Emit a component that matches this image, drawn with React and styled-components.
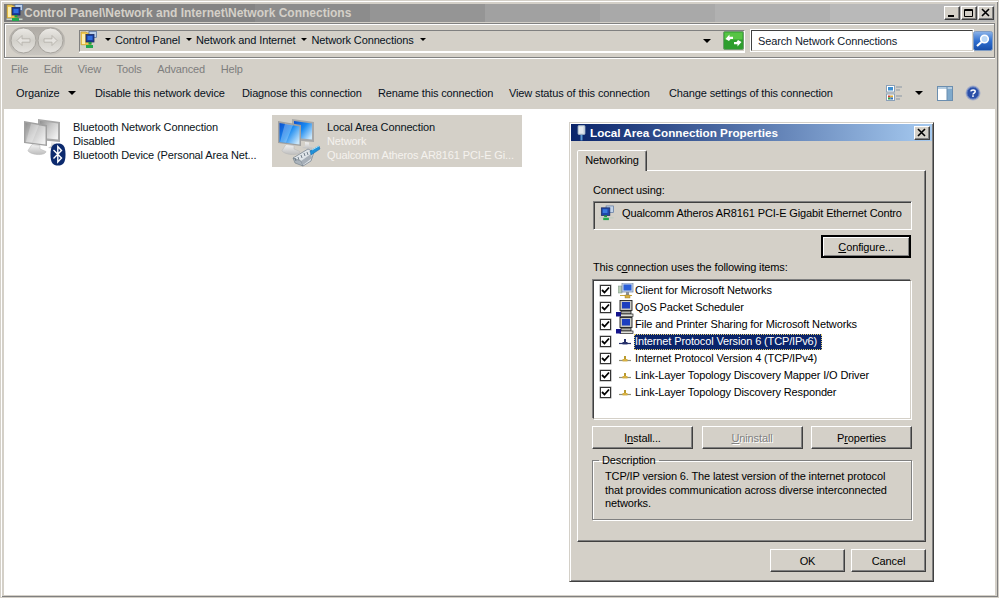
import React from "react";
import styled, { createGlobalStyle, css } from "styled-components";

const Global = createGlobalStyle`
  html, body { margin: 0; padding: 0; background: #d4d0c8; }
  body { font-family: "Liberation Sans", Arial, sans-serif; font-size: 11px; letter-spacing: -0.13px; color: #000; overflow: hidden; }
  * { box-sizing: border-box; }
`;

const raised = css`
  border: 1px solid;
  border-color: #fff #404040 #404040 #fff;
  box-shadow: inset -1px -1px 0 #808080;
`;

const Page = styled.div`
  position: relative;
  width: 999px;
  height: 598px;
  display: flex;
  flex-direction: column;
  padding: 3px 3px 2px 3px;
  background: #d4d0c8;
  border: 1px solid #d4d0c8;
  box-shadow: inset 1px 1px 0 #fff, inset -1px -1px 0 #808080;
`;
const TitleBar = styled.div`
  height: 18px;
  flex: none;
  display: flex;
  align-items: center;
  padding: 0 1px 0 2px;
  background: linear-gradient(90deg,
    #7b7b7b 0 136px, #848484 136px 251px, #8c8c8c 251px 366px, #959595 366px 481px,
    #a1a1a1 481px 596px, #a9a9a9 596px 711px, #b1b1b1 711px 826px, #b9b9b9 826px);
`;
const TitleText = styled.div`
  flex: 1;
  font-weight: 700;
  font-size: 12px;
  letter-spacing: 0;
  color: #d4d0c8;
  white-space: nowrap;
`;
const WinBtns = styled.div`
  display: flex;
  gap: 1px;
`;
const WinBtn = styled.div`
  width: 16px;
  height: 14px;
  background: #d4d0c8;
  display: flex;
  align-items: center;
  justify-content: center;
  ${raised}
`;
const AddressBand = styled.div`
  height: 35px;
  flex: none;
  margin-top: 1px;
  display: flex;
  align-items: center;
  padding: 0 1px 0 4px;
  background: #d4d0c8;
  border: 1px solid #808080;
  box-shadow: inset 1px 1px 0 #fff, 0 1px 0 #fff;
`;
const NavPill = styled.div`
  display: flex;
  align-items: center;
  padding: 1px;
  height: 28px;
  border-radius: 14px;
  background: linear-gradient(#aeaaa4, #c9c6c0);
`;
const AddressField = styled.div`
  flex: 1;
  height: 22px;
  margin-left: 14px;
  padding-bottom: 2px;
  display: flex;
  align-items: center;
  border-top: 1px solid #808080;
  border-left: 1px solid #808080;
  border-bottom: 1px solid #fff;
  border-right: 1px solid #fff;
  box-shadow: 0 1px 0 #fff;
`;
const Crumb = styled.span`
  white-space: nowrap;
  color: #06101c;
`;
const Caret = styled.span`
  display: inline-block;
  flex: none;
  width: 0;
  height: 0;
  border-left: ${p => p.$s || 3}px solid transparent;
  border-right: ${p => p.$s || 3}px solid transparent;
  border-top: ${p => p.$s || 3}px solid #000;
  margin: 0 ${p => p.$r ?? 6}px 0 ${p => p.$l ?? 6}px;
`;
const FieldEnd = styled.div`
  margin-left: auto;
  display: flex;
  align-items: center;
  margin-top: 2px;
`;
const SearchBox = styled.div`
  width: 222px;
  height: 21px;
  margin-left: 6px;
  padding-left: 6px;
  display: flex;
  align-items: center;
  background: #fff;
  border: 1px solid;
  border-color: #404040 #d4d0c8 #d4d0c8 #404040;
  box-shadow: 0 0 0 1px #fff;
  color: #10202c;
  white-space: nowrap;
`;
const MenuBar = styled.div`
  height: 21px;
  flex: none;
  display: flex;
  align-items: center;
  padding-left: 7px;
  gap: 15.6px;
  color: #7e7e7e;
`;
const MenuItem = styled.span``;
const Toolbar = styled.div`
  height: 30px;
  flex: none;
  display: flex;
  align-items: center;
  padding: 0 14px 2px 12px;
  color: #08101c;
`;
const ToolItem = styled.span`
  white-space: nowrap;
  width: ${p => p.$w}px;
  flex: none;
`;
const ToolIcons = styled.div`
  margin-left: auto;
  display: flex;
  align-items: center;
`;
const HelpGap = styled.span`
  width: 12px;
`;
const Content = styled.main`
  flex: 1;
  background: #fff;
  padding: 6px 14px;
  display: flex;
  align-items: flex-start;
  gap: 4px;
`;
const ConnItem = styled.div`
  width: 250px;
  height: 52px;
  display: flex;
  align-items: flex-start;
  padding: 3px 0 0 3px;
  background: ${p => p.$selected ? "#d4d0c8" : "transparent"};
`;
const ConnIcon = styled.div`
  width: 48px;
  height: 48px;
  flex: none;
`;
const ConnText = styled.div`
  margin-left: 4px;
  padding-top: 2px;
  line-height: 14px;
  white-space: nowrap;
  color: #0a1420;
`;
const ConnSub = styled.div`
  color: ${p => p.$light ? "#f4f2ee" : "#0a1420"};
`;

/* dialog */
const Dialog = styled.section`
  position: absolute;
  left: 568px;
  top: 121px;
  width: 365px;
  height: 460px;
  padding: 0 7px;
  display: flex;
  flex-direction: column;
  background: #d4d0c8;
  border: 1px solid;
  border-color: #d4d0c8 #404040 #404040 #d4d0c8;
  box-shadow: inset 1px 1px 0 #fff, inset -1px -1px 0 #808080;
`;
const DlgTitle = styled.div`
  height: 17px;
  flex: none;
  margin: 1px -6px 0;
  display: flex;
  align-items: center;
  padding: 0 2px 0 3px;
  background: linear-gradient(90deg, #0a246a, #a6caf0);
  color: #fff;
  font-weight: 700;
  font-size: 11.7px;
  letter-spacing: 0;
`;
const DlgTitleText = styled.div`
  flex: 1;
`;
const DlgClose = styled(WinBtn)`
  width: 16px;
  height: 14px;
`;
const Tabs = styled.div`
  margin-top: 9px;
  height: 20px;
  flex: none;
  display: flex;
  position: relative;
  z-index: 1;
`;
const Tab = styled.div`
  width: 70px;
  height: 21px;
  padding-bottom: 2px;
  display: flex;
  align-items: center;
  justify-content: center;
  background: #d4d0c8;
  border: 1px solid;
  border-bottom: none;
  border-color: #fff #404040 transparent #fff;
  border-radius: 2px 2px 0 0;
  box-shadow: inset -1px 0 0 #808080;
`;
const Panel = styled.div`
  width: 349px;
  height: 372px;
  flex: none;
  padding: 12px 13px 0 15px;
  display: flex;
  flex-direction: column;
  ${raised}
`;
const Label = styled.div`
  height: 14px;
  line-height: 14px;
  white-space: nowrap;
`;
const AdapterBox = styled.div`
  margin-top: 4px;
  height: 29px;
  display: flex;
  align-items: center;
  padding: 0 0 5px 5px;
  border: 1px solid;
  border-color: #808080 #fff #fff #808080;
  box-shadow: inset 1px 1px 0 #404040;
  white-space: nowrap;
  overflow: hidden;
`;
const AdapterName = styled.span`
  margin-left: 7px;
`;
const Button = styled.div`
  width: ${p => p.$w || 100}px;
  height: 23px;
  flex: none;
  display: flex;
  align-items: center;
  justify-content: center;
  background: #d4d0c8;
  color: ${p => p.$disabled ? "#808080" : "#000"};
  text-shadow: ${p => p.$disabled ? "1px 1px 0 #fff" : "none"};
  ${raised}
  ${p => p.$default && css`
    border: 2px solid #000;
    box-shadow: inset 1px 1px 0 #fff, inset -1px -1px 0 #808080;
  `}
`;
const ConfigureRow = styled.div`
  margin-top: 5px;
  display: flex;
  justify-content: flex-end;
  padding-right: 1px;
`;
const ListLabel = styled(Label)`
  margin-top: 2px;
`;
const List = styled.div`
  margin-top: 6px;
  height: 139px;
  width: 318px;
  padding: 1px 0 0 6px;
  background: #fff;
  border: 1px solid;
  border-color: #404040 #d4d0c8 #d4d0c8 #404040;
  box-shadow: -1px -1px 0 #808080, 1px 1px 0 #fff;
`;
const Row = styled.div`
  height: 17px;
  display: flex;
  align-items: center;
`;
const Check = styled.div`
  width: 11px;
  height: 11px;
  flex: none;
  display: flex;
  align-items: center;
  justify-content: center;
  border: 1px solid #333;
  box-shadow: 0 0 0 0.5px #999;
`;
const RowIcon = styled.div`
  width: 16px;
  height: 16px;
  flex: none;
  margin-left: 7px;
`;
const RowText = styled.div`
  padding: 0 2px 0 1px;
  height: 16px;
  line-height: 15px;
  white-space: nowrap;
  ${p => p.$selected && css`
    padding-right: 5px;
    background: #0a246a;
    color: #fff;
    outline: 1px dotted #e8d070;
    outline-offset: -1px;
  `}
`;
const ButtonRow = styled.div`
  margin-top: 7px;
  margin-left: -1px;
  width: 320px;
  display: flex;
  justify-content: space-between;
`;
const Group = styled.fieldset`
  margin: 4px 0 0 -1px;
  padding: 3px 8px 0 12px;
  width: 320px;
  height: 67px;
  min-width: 0;
  border: 1px solid #808080;
  box-shadow: inset 1px 1px 0 #fff, 1px 1px 0 #fff;
  line-height: 13.5px;
`;
const Legend = styled.legend`
  padding: 0 3px;
  margin-left: -6px;
  line-height: 14px;
`;
const DlgFooter = styled.div`
  margin-top: 7px;
  display: flex;
  justify-content: flex-end;
  gap: 6px;
`;

/* ---- drawings ---- */
const NetFolder = ({ size = 18 }) => (
  <svg width={size} height={size} viewBox="0 0 18 18" style={{ flex: "none", display: "block" }}>
    <path d="M1 1h5l1 1h4v12H1z" fill="#f0c850" stroke="#b8962e" strokeWidth=".6" />
    <path d="M2 3h3v10H2z" fill="#fbeeb0" />
    <rect x="9" y=".5" width="7.500" height="6" fill="#bcd0ea" stroke="#4d6c99" strokeWidth=".7" />
    <rect x="6" y="3.500" width="8" height="7.500" fill="#1a3d9c" stroke="#1b2a60" strokeWidth=".8" />
    <rect x="7.500" y="5" width="5" height="4" fill="#2f6fe0" />
    <rect x="8.500" y="11" width="3" height="2.500" fill="#1c9a45" />
    <rect x=".5" y="14.500" width="16" height="1.500" fill="#c9d5c9" />
    <rect x="6" y="14" width="7" height="3" fill="#22a84e" />
  </svg>
);

const Monitors = ({ active, id }) => {
  const g = active ? ["#0a4fd0", "#1a8af0", "#c8e6fb"] : ["#8f8f8f", "#c9c9c9", "#f1f1f1"];
  return (
    <svg width="48" height="48" viewBox="0 0 48 48" style={{ display: "block" }}>
      <defs>
        <linearGradient id={id} x1="0" y1="0" x2="1" y2="0.8">
          <stop offset="0" stopColor={g[0]} />
          <stop offset=".5" stopColor={g[1]} />
          <stop offset="1" stopColor={g[2]} />
        </linearGradient>
        <linearGradient id={id + "b"} x1="0" y1="0" x2="0" y2="1">
          <stop offset="0" stopColor="#f2f2f2" />
          <stop offset="1" stopColor="#bdbdbd" />
        </linearGradient>
      </defs>
      <path d="M17 1l22 3v20l-22-2z" fill="#a8a8a8" />
      <path d="M19 3l18 2.500v16l-18-1.800z" fill={`url(#${id})`} />
      <path d="M30 24l4 .5v3l4 2-1 1.500-10-1 3-2z" fill={`url(#${id}b)`} />
      <path d="M3 3l23 4v21L3 25z" fill="#a0a0a0" />
      <path d="M4.500 5l20 3.600v18L4.500 24z" fill={`url(#${id})`} />
      <path d="M10 5.500l8 1.500-7 17.500-6-.5z" fill="#fff" opacity=".28" />
      <path d="M11 26.500l8 1v3.500l6 2.500c0 2-4 3.500-9 3s-9-2.500-9-4z" fill={`url(#${id}b)`} stroke="#b4b4b4" strokeWidth=".5" />
    </svg>
  );
};

const BluetoothBadge = () => (
  <svg width="16" height="23" viewBox="0 0 16 23" style={{ display: "block" }}>
    <path d="M8 .5C13 .5 15.500 3 15.500 11.500S13 22.500 8 22.500.5 20 .5 11.500 3 .5 8 .5z" fill="#0c2a6e" />
    <path d="M3.500 7l8 8-3.700 4V3.500l3.700 4-8 8" fill="none" stroke="#fff" strokeWidth="1.400" />
  </svg>
);

const Plug = () => (
  <svg width="30" height="23" viewBox="0 0 30 23" style={{ display: "block" }}>
    <path d="M1 14l15-9 6 3-3 9-8 5z" fill="#dfe4e8" stroke="#7d8894" strokeWidth=".8" />
    <path d="M1 14l8 3 2 5-8-3z" fill="#aab3bb" stroke="#6f7a85" strokeWidth=".6" />
    <path d="M3 14l1 3M6 13l1 3M9 11l1 3M12 9l1 3M15 8l1 3" stroke="#6a7682" strokeWidth=".9" />
    <path d="M9 17l10-7 1 4-9 7z" fill="#8e99a4" opacity=".7" />
    <path d="M18 7l9-5 1 3-9 6z" fill="#1f90d8" stroke="#1566a6" strokeWidth=".5" />
    <path d="M20 6l7-4" stroke="#9fe0fa" strokeWidth="1" />
  </svg>
);

const NavBtn = ({ flip }) => (
  <svg width="27" height="27" viewBox="0 0 27 27" style={{ display: "block", transform: flip ? "scaleX(-1)" : "none" }}>
    <defs>
      <linearGradient id="nb" x1="0" y1="0" x2="0" y2="1">
        <stop offset="0" stopColor="#eceae6" />
        <stop offset=".5" stopColor="#d2d0ca" />
        <stop offset="1" stopColor="#e6e4e0" />
      </linearGradient>
    </defs>
    <circle cx="13.500" cy="13.500" r="12.500" fill="url(#nb)" stroke="#a7a49e" />
    <path d="M7 13.500l5-5v3.300h8v3.400h-8v3.300z" fill="#e5e3df" stroke="#b5b2ac" strokeWidth=".9" />
  </svg>
);

const Refresh = () => (
  <svg width="21" height="19" viewBox="0 0 21 19" style={{ display: "block" }}>
    <rect x=".5" y=".5" width="20" height="18" rx="1.500" fill="#2f9e2f" stroke="#6f9d6f" />
    <rect x="1.500" y="1.500" width="18" height="7" fill="#57c445" />
    <path d="M2.500 8l4-4.500v2.300H10V8H7.500L6 10zM18.500 11l-4 4.500v-2.300H11V11h2.500L15 9z" fill="#fff" />
  </svg>
);

const SearchBtn = () => (
  <svg width="20" height="20" viewBox="0 0 20 20" style={{ display: "block", flex: "none" }}>
    <defs>
      <linearGradient id="sb" x1="0" y1="0" x2="0" y2="1">
        <stop offset="0" stopColor="#8db4e8" />
        <stop offset=".5" stopColor="#2f6fd0" />
        <stop offset="1" stopColor="#174da8" />
      </linearGradient>
    </defs>
    <rect x=".5" y=".5" width="19" height="19" rx="2" fill="url(#sb)" stroke="#7f9cc4" />
    <circle cx="11.500" cy="8" r="3.800" fill="#bcd8f5" stroke="#fff" strokeWidth="1.600" />
    <path d="M8.500 11l-4.500 4" stroke="#fff" strokeWidth="2.200" />
  </svg>
);

const ViewsIcon = () => (
  <svg width="17" height="16" viewBox="0 0 17 16" style={{ display: "block" }}>
    <rect x=".5" y=".5" width="8" height="6.500" fill="#fff" stroke="#8aa0b8" />
    <rect x="2" y="2" width="5" height="3.500" fill="#3f8fd0" />
    <rect x=".5" y="9" width="8" height="6.500" fill="#fff" stroke="#8aa0b8" />
    <rect x="2" y="10.500" width="2.500" height="2" fill="#d04030" />
    <rect x="4.500" y="10.500" width="2.500" height="2" fill="#e0b030" />
    <rect x="2" y="12.500" width="2.500" height="2" fill="#2f9e4f" />
    <rect x="4.500" y="12.500" width="2.500" height="2" fill="#3070c0" />
    <path d="M10 2h6M10 5h4M10 11h6M10 14h4" stroke="#8a97a5" strokeWidth="1" />
  </svg>
);

const PaneIcon = () => (
  <svg width="16" height="15" viewBox="0 0 16 15" style={{ display: "block" }}>
    <rect x=".5" y=".5" width="15" height="14" fill="#fff" stroke="#6b8eaf" />
    <rect x="1" y="1" width="14" height="2" fill="#b6cde0" />
    <rect x="10" y="3" width="5" height="11" fill="#7fa9cb" />
    <path d="M10 1v13" stroke="#6b8eaf" />
  </svg>
);

const HelpIcon = () => (
  <svg width="16" height="16" viewBox="0 0 16 16" style={{ display: "block" }}>
    <circle cx="8" cy="8" r="7.500" fill="#a5aec8" />
    <circle cx="8" cy="8" r="6" fill="#2a4fa8" stroke="#5a78c0" />
    <path d="M5.800 6.300C6 4.700 10.200 4.500 10.200 6.500c0 1.600-2.200 1.500-2.200 3" fill="none" stroke="#fff" strokeWidth="1.500" />
    <rect x="7.200" y="10.300" width="1.600" height="1.600" fill="#fff" />
  </svg>
);

const Glyph = ({ type }) => (
  <svg width="10" height="10" viewBox="0 0 10 10" style={{ display: "block" }}>
    {type === "min" && <rect x="1" y="7" width="6" height="2" fill="#000" />}
    {type === "max" && <path d="M.5 1.500h8v7h-8zM.5 2.500h8" fill="none" stroke="#000" />}
    {type === "close" && <path d="M1 1l7 7M8 1L1 8" stroke="#000" strokeWidth="1.600" />}
  </svg>
);

const Tick = () => (
  <svg width="9" height="9" viewBox="0 0 9 9" style={{ display: "block" }}>
    <path d="M1 4l2.500 2.500L8 1.500" fill="none" stroke="#000" strokeWidth="1.800" />
  </svg>
);

const LanCard = () => (
  <svg width="16" height="17" viewBox="0 0 16 18" style={{ display: "block", flex: "none" }}>
    <rect x="7" y="1" width="8" height="7" fill="#c3d3e8" stroke="#556f9a" strokeWidth=".7" />
    <rect x="2" y="3" width="9" height="8" fill="#1f46a8" stroke="#1b2a60" strokeWidth=".8" />
    <rect x="3.500" y="4.500" width="5" height="4" fill="#3a7be0" />
    <rect x="5" y="11" width="3" height="2" fill="#1c9a45" />
    <rect x="0" y="13" width="15" height="1.200" fill="#c0cbc0" />
    <rect x="4" y="13.500" width="6" height="2.500" fill="#22a84e" />
  </svg>
);

const ClientIcon = () => (
  <svg width="16" height="16" viewBox="0 0 16 16" style={{ display: "block" }}>
    <rect x="0" y="3" width="4" height="7" fill="#b8ccb4" stroke="#7a8f88" strokeWidth=".5" />
    <rect x="4" y="0" width="11" height="9" fill="#c9d8ee" stroke="#6c7f9c" strokeWidth=".7" />
    <rect x="5.500" y="1.500" width="8" height="6" fill="#2a5fd8" />
    <rect x="8" y="9" width="3" height="3" fill="#8a8f96" />
    <path d="M2 12.500h12" stroke="#c9a53c" strokeWidth="1" />
    <rect x="7" y="12" width="5" height="3" fill="#d8b040" stroke="#8a7020" strokeWidth=".4" />
  </svg>
);

const ServiceIcon = () => (
  <svg width="18" height="17" viewBox="0 0 18 17" style={{ display: "block", marginLeft: -2 }}>
    <rect x="4" y=".5" width="12" height="10" fill="#c6c6c0" stroke="#202020" strokeWidth=".9" />
    <rect x="6" y="2" width="8" height="6.500" fill="#1d3fc0" />
    <rect x="5" y="11" width="10" height="3" fill="#b0b0aa" stroke="#202020" strokeWidth=".8" />
    <rect x="4" y="14" width="13" height="2.500" fill="#e0e0da" stroke="#202020" strokeWidth=".7" />
    <rect x="0" y="12" width="5" height="4.500" fill="#14148c" />
  </svg>
);

const ProtoIcon = ({ dark }) => (
  <svg width="16" height="16" viewBox="0 0 16 16" style={{ display: "block" }}>
    <path d="M1 9.500h12" stroke={dark ? "#25306a" : "#8f8f7a"} strokeWidth="1.200" />
    <rect x="6" y="5" width="2" height="4" fill={dark ? "#25306a" : "#b89a30"} />
    <rect x="4.500" y="8" width="5" height="2.400" fill={dark ? "#25306a" : "#d8b040"} />
  </svg>
);

const PlugSmall = () => (
  <svg width="16" height="16" viewBox="0 0 16 16" style={{ display: "block", flex: "none" }}>
    <rect x="4" y=".5" width="7" height="9" rx="1" fill="#d4dce4" stroke="#9fb2c4" strokeWidth=".8" />
    <path d="M6 2v6M8 2v6" stroke="#fff" strokeWidth=".8" />
    <rect x="6.500" y="10" width="2" height="5.500" fill="#5a9ad4" />
  </svg>
);

const rows = [
  { icon: <ClientIcon />, text: "Client for Microsoft Networks" },
  { icon: <ServiceIcon />, text: "QoS Packet Scheduler" },
  { icon: <ServiceIcon />, text: "File and Printer Sharing for Microsoft Networks" },
  { icon: <ProtoIcon dark />, text: "Internet Protocol Version 6 (TCP/IPv6)", selected: true },
  { icon: <ProtoIcon />, text: "Internet Protocol Version 4 (TCP/IPv4)" },
  { icon: <ProtoIcon />, text: "Link-Layer Topology Discovery Mapper I/O Driver" },
  { icon: <ProtoIcon />, text: "Link-Layer Topology Discovery Responder" },
];

const IconOverlay = styled.div`
  position: relative;
  width: 48px;
  height: 48px;
`;
const Badge = styled.div`
  position: absolute;
  left: ${p => p.$x}px;
  top: ${p => p.$y}px;
`;

export default function App() {
  return (
    <Page>
      <Global />
      <TitleBar>
        <NetFolder />
        <TitleText>Control Panel\Network and Internet\Network Connections</TitleText>
        <WinBtns>
          <WinBtn><Glyph type="min" /></WinBtn>
          <WinBtn><Glyph type="max" /></WinBtn>
          <WinBtn><Glyph type="close" /></WinBtn>
        </WinBtns>
      </TitleBar>

      <AddressBand>
        <NavPill><NavBtn /><NavBtn flip /></NavPill>
        <AddressField>
          <NetFolder />
          <Caret $l={7} $r={4} />
          <Crumb>Control Panel</Crumb>
          <Caret $l={6} $r={4} />
          <Crumb>Network and Internet</Crumb>
          <Caret $l={6} $r={4} />
          <Crumb>Network Connections</Crumb>
          <Caret $l={6} $r={0} />
          <FieldEnd>
            <Caret $s={4} $l={0} $r={12} />
            <Refresh />
          </FieldEnd>
        </AddressField>
        <SearchBox>Search Network Connections</SearchBox>
        <SearchBtn />
      </AddressBand>

      <MenuBar>
        <MenuItem>File</MenuItem>
        <MenuItem>Edit</MenuItem>
        <MenuItem>View</MenuItem>
        <MenuItem>Tools</MenuItem>
        <MenuItem>Advanced</MenuItem>
        <MenuItem>Help</MenuItem>
      </MenuBar>

      <Toolbar>
        <ToolItem $w={52}>Organize</ToolItem>
        <Caret $s={4} $l={0} $r={19} />
        <ToolItem $w={147}>Disable this network device</ToolItem>
        <ToolItem $w={136}>Diagnose this connection</ToolItem>
        <ToolItem $w={131}>Rename this connection</ToolItem>
        <ToolItem $w={160}>View status of this connection</ToolItem>
        <ToolItem $w={200}>Change settings of this connection</ToolItem>
        <ToolIcons>
          <ViewsIcon />
          <Caret $s={4} $l={12} $r={14} />
          <PaneIcon />
          <HelpGap />
          <HelpIcon />
        </ToolIcons>
      </Toolbar>

      <Content>
        <ConnItem>
          <ConnIcon>
            <IconOverlay>
              <Monitors id="mg" />
              <Badge $x={29} $y={25}><BluetoothBadge /></Badge>
            </IconOverlay>
          </ConnIcon>
          <ConnText>
            Bluetooth Network Connection
            <ConnSub>Disabled</ConnSub>
            <ConnSub>Bluetooth Device (Personal Area Net...</ConnSub>
          </ConnText>
        </ConnItem>
        <ConnItem $selected>
          <ConnIcon>
            <IconOverlay>
              <Monitors id="mb" active />
              <Badge $x={17} $y={26}><Plug /></Badge>
            </IconOverlay>
          </ConnIcon>
          <ConnText>
            Local Area Connection
            <ConnSub $light>Network</ConnSub>
            <ConnSub $light>Qualcomm Atheros AR8161 PCI-E Gi...</ConnSub>
          </ConnText>
        </ConnItem>
      </Content>

      <Dialog>
        <DlgTitle>
          <PlugSmall />
          <DlgTitleText>Local Area Connection Properties</DlgTitleText>
          <DlgClose><Glyph type="close" /></DlgClose>
        </DlgTitle>
        <Tabs><Tab>Networking</Tab></Tabs>
        <Panel>
          <Label>Connect using:</Label>
          <AdapterBox>
            <LanCard />
            <AdapterName>Qualcomm Atheros AR8161 PCI-E Gigabit Ethernet Contro</AdapterName>
          </AdapterBox>
          <ConfigureRow>
            <Button $w={90} $default><span><u>C</u>onfigure...</span></Button>
          </ConfigureRow>
          <ListLabel>This c<u>o</u>nnection uses the following items:</ListLabel>
          <List>
            {rows.map(r => (
              <Row key={r.text}>
                <Check><Tick /></Check>
                <RowIcon>{r.icon}</RowIcon>
                <RowText $selected={r.selected}>{r.text}</RowText>
              </Row>
            ))}
          </List>
          <ButtonRow>
            <Button $w={101}><span>I<u>n</u>stall...</span></Button>
            <Button $w={101} $disabled><span><u>U</u>ninstall</span></Button>
            <Button $w={101}><span>P<u>r</u>operties</span></Button>
          </ButtonRow>
          <Group>
            <Legend>Description</Legend>
            TCP/IP version 6. The latest version of the internet protocol that provides communication across diverse interconnected networks.
          </Group>
        </Panel>
        <DlgFooter>
          <Button $w={75}>OK</Button>
          <Button $w={75}>Cancel</Button>
        </DlgFooter>
      </Dialog>
    </Page>
  );
}
